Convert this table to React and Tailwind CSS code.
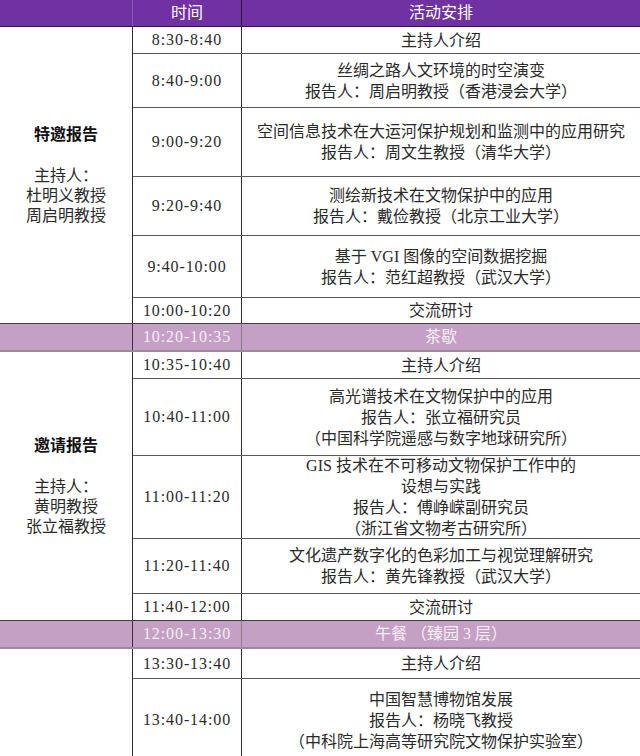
import React from "react";

const font = { fontFamily: '"Liberation Serif", "Noto Sans CJK SC", serif' };

const groups = [
  {
    title: "特邀报告",
    hosts: ["主持人：", "杜明义教授", "周启明教授"],
    rows: [
      { t: "8:30-8:40", h: "h-[27px]", a: ["主持人介绍"] },
      { t: "8:40-9:00", h: "h-[54px]", a: ["丝绸之路人文环境的时空演变", "报告人：周启明教授（香港浸会大学）"] },
      { t: "9:00-9:20", h: "h-[69px]", a: ["空间信息技术在大运河保护规划和监测中的应用研究", "报告人：周文生教授（清华大学）"] },
      { t: "9:20-9:40", h: "h-[59px]", a: ["测绘新技术在文物保护中的应用", "报告人：戴俭教授（北京工业大学）"] },
      { t: "9:40-10:00", h: "h-[62px]", a: ["基于 VGI 图像的空间数据挖掘", "报告人：范红超教授（武汉大学）"] },
      { t: "10:00-10:20", h: "h-[25px]", a: ["交流研讨"], last: true },
    ],
    brk: { t: "10:20-10:35", a: "茶歇" },
  },
  {
    title: "邀请报告",
    hosts: ["主持人：", "黄明教授", "张立福教授"],
    rows: [
      { t: "10:35-10:40", h: "h-[27px]", a: ["主持人介绍"] },
      { t: "10:40-11:00", h: "h-[77px]", a: ["高光谱技术在文物保护中的应用", "报告人：张立福研究员", "（中国科学院遥感与数字地球研究所）"] },
      { t: "11:00-11:20", h: "h-[83px]", a: ["GIS 技术在不可移动文物保护工作中的", "设想与实践", "报告人：傅峥嵘副研究员", "（浙江省文物考古研究所）"] },
      { t: "11:20-11:40", h: "h-[55px]", a: ["文化遗产数字化的色彩加工与视觉理解研究", "报告人：黄先锋教授（武汉大学）"] },
      { t: "11:40-12:00", h: "h-[26px]", a: ["交流研讨"], last: true },
    ],
    brk: { t: "12:00-13:30", a: "午餐 （臻园 3 层）" },
  },
  {
    title: null,
    hosts: [],
    rows: [
      { t: "13:30-13:40", h: "h-[30px]", a: ["主持人介绍"] },
      { t: "13:40-14:00", h: "h-[82px]", a: ["中国智慧博物馆发展", "报告人：杨晓飞教授", "（中科院上海高等研究院文物保护实验室）"], last: true },
    ],
  },
];

function Row({ r }) {
  return (
    <div className={`flex ${r.h} ${r.last ? "" : "border-b border-[#5a5a5a]"}`}>
      <div className="w-[109px] shrink-0 flex items-center justify-center border-r border-[#2e2e2e] tracking-[0.9px]">
        {r.t}
      </div>
      <div className="flex-1 flex flex-col items-center justify-center leading-[21px] text-center">
        {r.a.map((l, i) => (
          <div key={i} className="whitespace-nowrap">{l}</div>
        ))}
      </div>
    </div>
  );
}

function Break({ b }) {
  return (
    <div className="flex h-[29px] bg-[#c4a0c5] text-[#f6eef6] border-t border-[#4a3a4a] border-b-2 border-b-[#9a8a9a]">
      <div className="w-[133px] shrink-0 border-r border-[#3a2f3a]" />
      <div className="w-[109px] shrink-0 flex items-center justify-center border-r border-[#8d7a8e] tracking-[0.9px]">
        {b.t}
      </div>
      <div className="flex-1 flex items-center justify-center">{b.a}</div>
    </div>
  );
}

export default function App() {
  return (
    <div className="w-[640px] h-[756px] overflow-hidden bg-white text-[16px] text-[#2a2a2a]" style={font}>
      <div className="flex h-[27px] bg-[#7031a3] text-white border-b border-[#2a1a3a]">
        <div className="w-[133px] shrink-0 border-r border-[#8a5cb5]" />
        <div className="w-[109px] shrink-0 flex items-center justify-center border-r border-[#2a1a3a]">时间</div>
        <div className="flex-1 flex items-center justify-center">活动安排</div>
      </div>
      {groups.map((g, gi) => (
        <React.Fragment key={gi}>
          <div className="flex">
            <div className="w-[133px] shrink-0 border-r border-[#2e2e2e] flex flex-col items-center justify-center text-center">
              {g.title && <div className="font-bold leading-[21px] mb-[21px] text-[#111]">{g.title}</div>}
              {g.hosts.map((h, i) => (
                <div key={i} className="leading-[20px]">{h}</div>
              ))}
            </div>
            <div className="flex-1 flex flex-col">
              {g.rows.map((r, i) => (
                <Row key={i} r={r} />
              ))}
            </div>
          </div>
          {g.brk && <Break b={g.brk} />}
        </React.Fragment>
      ))}
    </div>
  );
}
